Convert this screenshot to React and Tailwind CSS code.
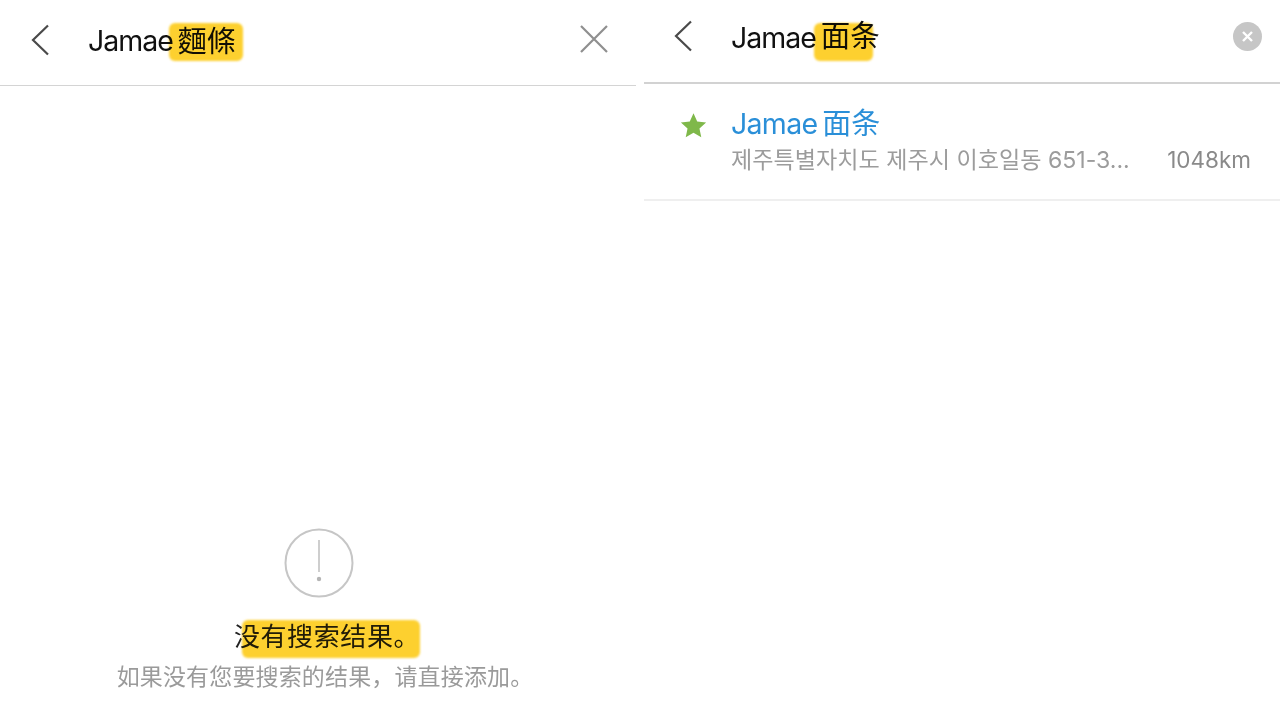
const sans = "font-['Inter','Noto_Sans_CJK_SC',sans-serif]";

const Marker = ({ className }) => (
  <span
    className={`absolute rounded-md bg-[#fdd02f] mix-blend-multiply blur-[0.8px] ${className}`}
  />
);

const Back = () => (
  <svg width="20" height="32" viewBox="0 0 20 32" fill="none" stroke="#4a4a4a" strokeWidth="2.2">
    <path d="M18 1.5 3 16l15 14.5" />
  </svg>
);

const Left = () => (
  <section className="flex h-full w-[636px] flex-col">
    <header className="flex h-[86px] shrink-0 items-center justify-between border-b border-[#d4d4d4] pr-[27px] pb-[6px] pl-[30px]">
      <div className="flex items-center">
        <Back />
        <div className="relative ml-[38px] flex items-center text-[28.5px] leading-none tracking-[-1px] text-[#111]">
          <span className="mt-[4px]">Jamae</span>
          <span className="ml-[5px] font-['Noto_Sans_CJK_TC',sans-serif] text-[29px] tracking-normal">麵條</span>
          <Marker className="top-0 left-[81px] h-[38px] w-[74px]" />
        </div>
      </div>
      <svg className="-mt-[1px]" width="30" height="30" viewBox="0 0 30 30" stroke="#8f8f8f" strokeWidth="2.2">
        <path d="m2 2 26 26M28 2 2 28" />
      </svg>
    </header>
    <div className="flex flex-1 flex-col items-center justify-end pb-[20px]">
      <svg className="ml-[2px]" width="70" height="70" viewBox="0 0 70 70" fill="none">
        <circle cx="35" cy="35" r="33.5" stroke="#c6c6c6" strokeWidth="2" />
        <path d="M35 12v32" stroke="#c2c2c2" strokeWidth="1.6" />
        <circle cx="35" cy="51" r="2.2" fill="#b5b5b5" />
      </svg>
      <div className="relative mt-[20px] ml-[18px] text-[26px] leading-[38px] tracking-[0.6px] text-[#222]">
        没有搜索结果。
        <Marker className="top-[2px] left-[8px] h-[38px] w-[178px]" />
      </div>
      <p className="mt-[4px] ml-[14px] text-[23px] leading-[34px] tracking-[0.15px] text-[#9a9a9a]">
        如果没有您要搜索的结果，请直接添加。
      </p>
    </div>
  </section>
);

const Right = () => (
  <section className="flex h-full flex-1 flex-col">
    <header className="flex h-[84px] shrink-0 items-center justify-between border-b-2 border-[#d2d2d2] pr-[18px] pl-[29px]">
      <div className="-mt-[10px] flex items-center">
        <Back />
        <div className="relative ml-[38px] flex items-center text-[28.5px] leading-none tracking-[-1px] text-[#111]">
          <span className="mt-[4px]">Jamae</span>
          <span className="ml-[5px] text-[29.5px] tracking-normal">面条</span>
          <Marker className="top-[3px] left-[83px] h-[38px] w-[59px]" />
        </div>
      </div>
      <span className="-mt-[10px] flex h-[29px] w-[29px] items-center justify-center rounded-full bg-[#c6c6c6]">
        <svg width="13" height="13" viewBox="0 0 13 13" stroke="#fff" strokeWidth="2.4">
          <path d="m2 2 9 9M11 2l-9 9" />
        </svg>
      </span>
    </header>
    <div className="flex h-[117px] items-start border-b-2 border-[#efefef] pr-[29px] pl-[36px]">
      <svg className="mt-[28px] shrink-0" width="27" height="27" viewBox="0 0 24 24" fill="#7fb84a">
        <path d="m12 1.2 3.3 7.2 7.9.9-5.9 5.3 1.6 7.8-6.9-3.900-6.900 3.900 1.600-7.800L.8 9.300l7.900-.9z" />
      </svg>
      <div className="ml-[24px] min-w-0 flex-1 pt-[21px]">
        <p className="flex items-center text-[28.5px] leading-[38px] tracking-[-0.7px] text-[#2a8fd8]">
          Jamae
          <span className="ml-[5px] text-[29px] tracking-normal">面条</span>
        </p>
        <div className="mt-[1px] flex items-center justify-between text-[23px] leading-[32px] text-[#9c9c9c]">
          <span className="font-['Inter','Noto_Sans_CJK_KR',sans-serif] text-[23.1px]">제주특별자치도 제주시 이호일동 651-3...</span>
          <span className="text-[22.5px] text-[#8a8a8a]">1048km</span>
        </div>
      </div>
    </div>
  </section>
);

const App = () => (
  <div className={`flex h-[714px] w-[1280px] gap-2 overflow-hidden bg-white ${sans}`}>
    <Left />
    <Right />
  </div>
);

export default App;
